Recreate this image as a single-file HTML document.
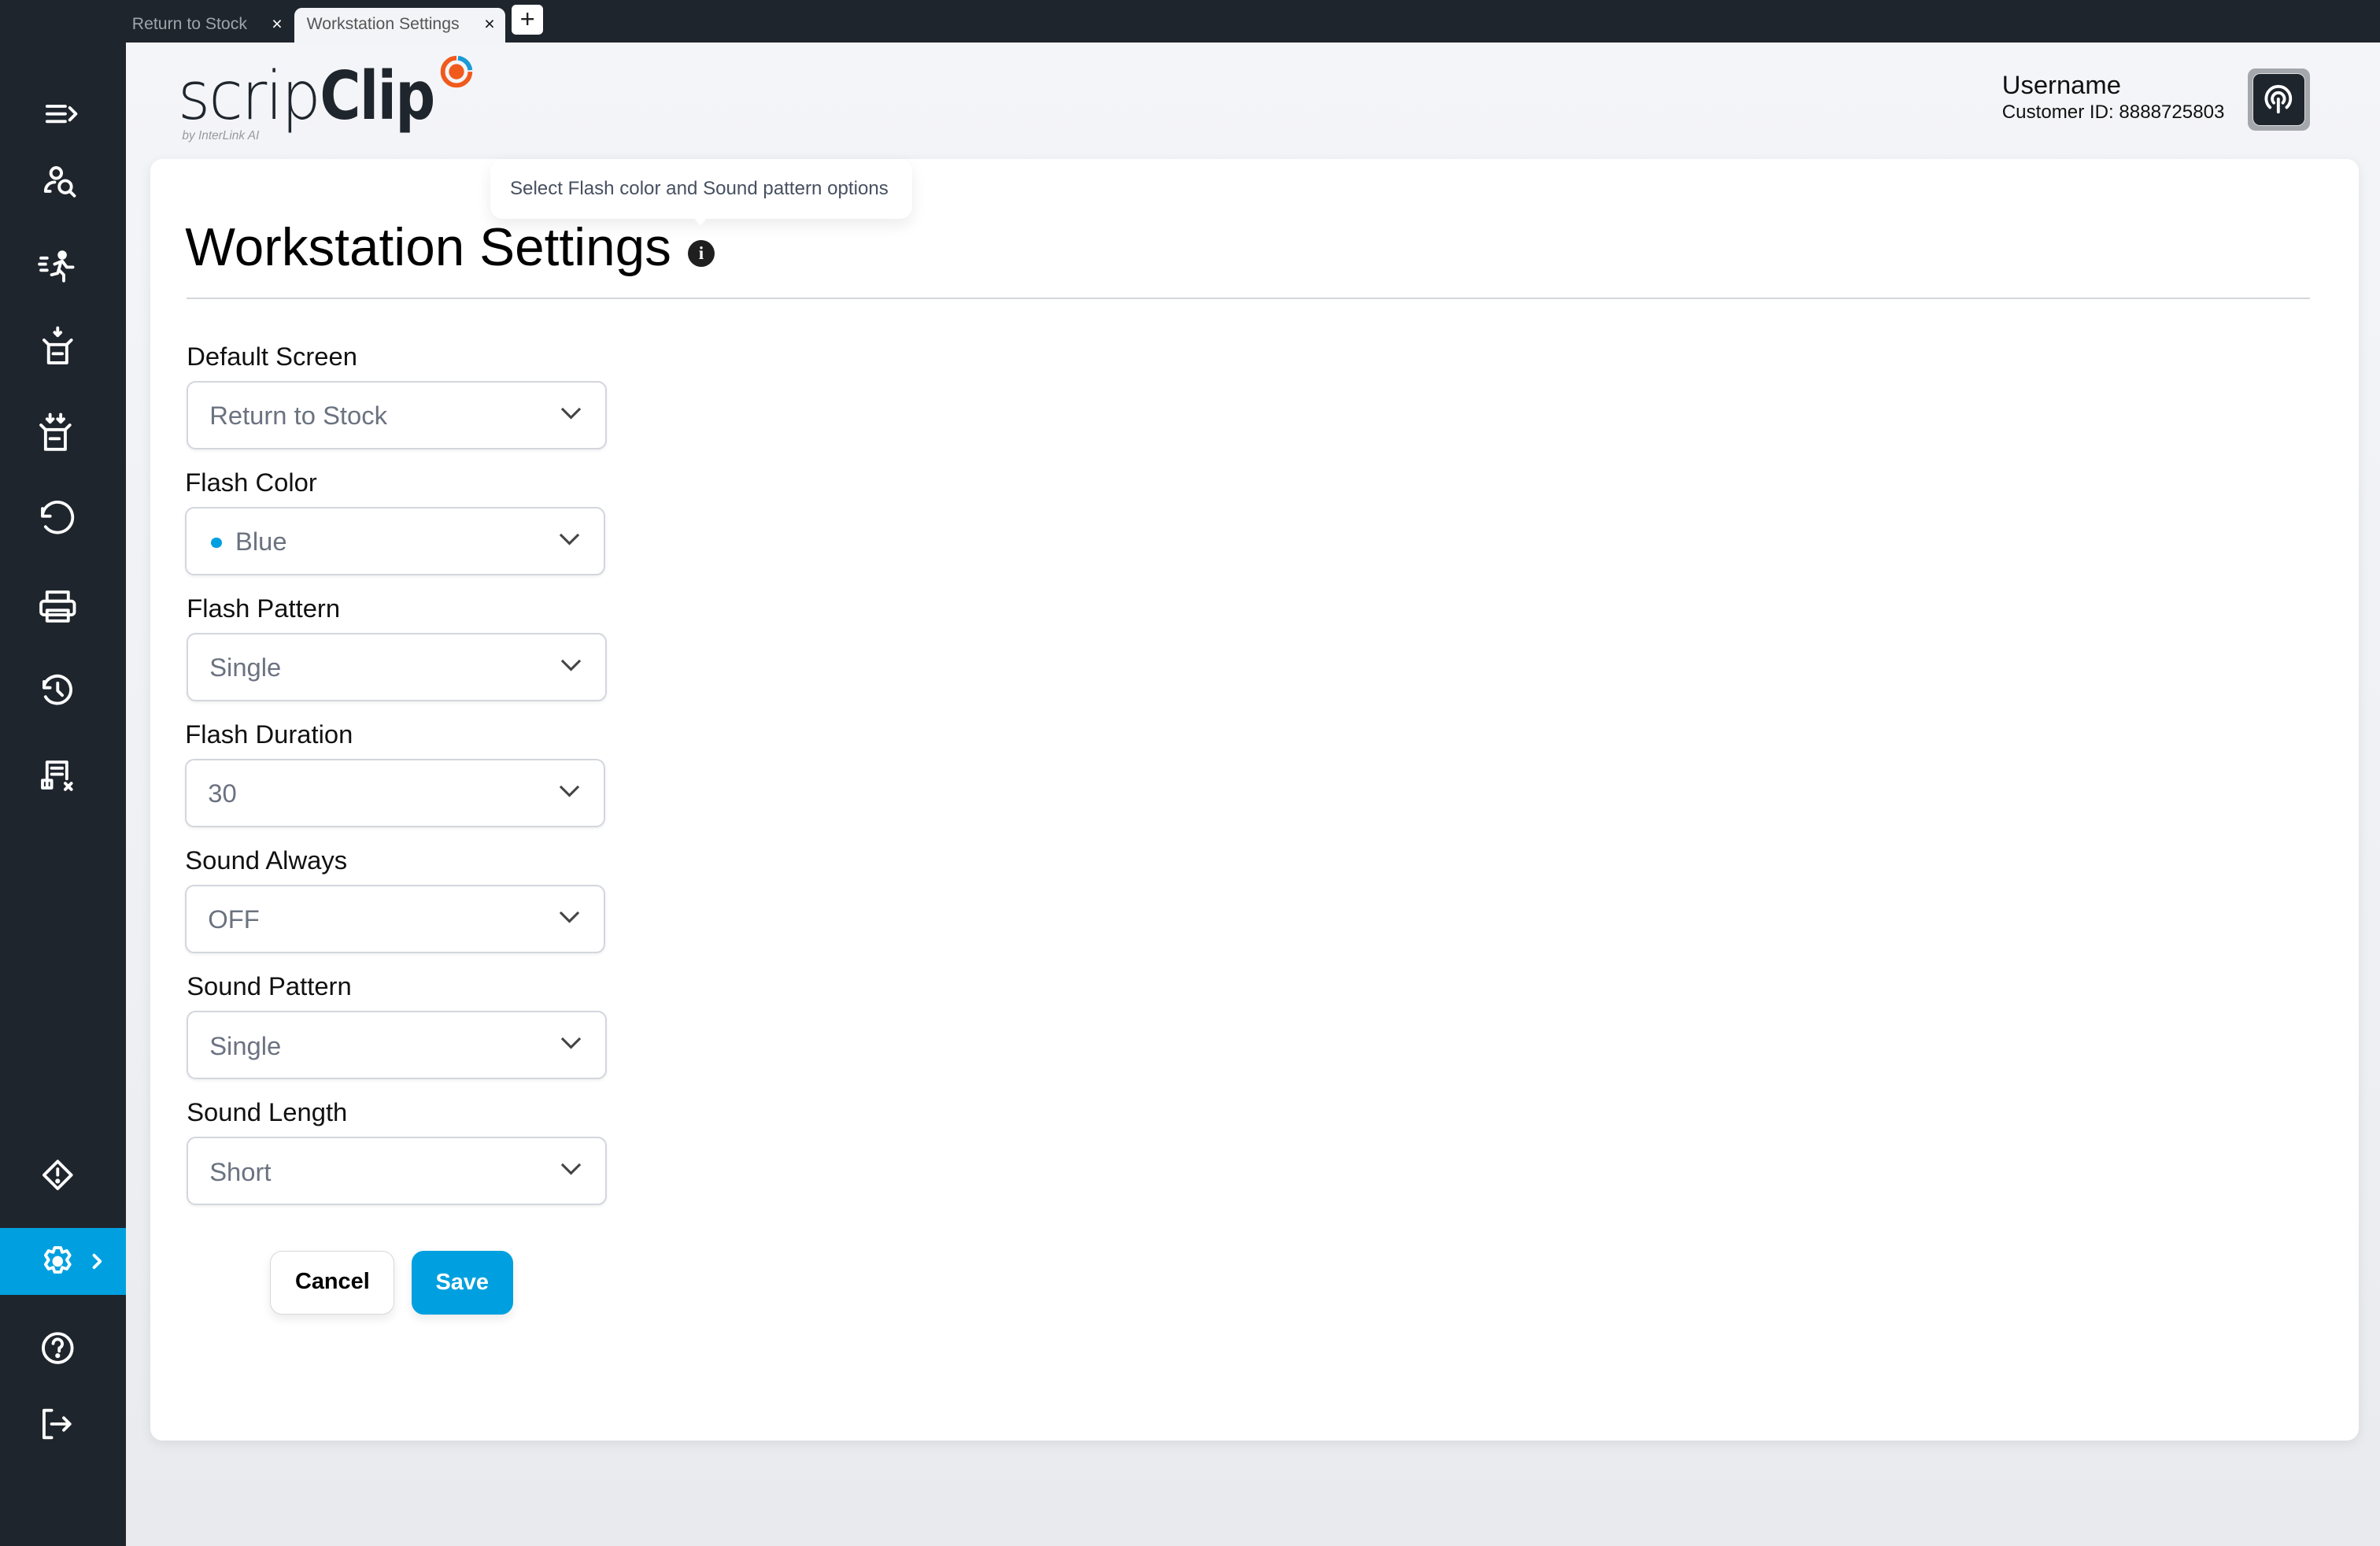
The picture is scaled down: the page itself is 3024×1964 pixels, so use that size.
<!DOCTYPE html>
<html><head><meta charset="utf-8"><style>
*{box-sizing:border-box;margin:0;padding:0}
html,body{width:3024px;height:1964px;overflow:hidden}
body{background:#1f252d;font-family:"Liberation Sans",Arial,sans-serif}
#w{zoom:1.92857;width:1568px;height:1019px;position:relative}
.top{position:absolute;left:0;top:0;width:1568px;height:28px;background:#1f252d}
.side{position:absolute;left:0;top:0;width:83px;height:1019px;background:#1f252d}
.main{position:absolute;left:83px;top:28px;right:0;bottom:0;background:linear-gradient(180deg,#f4f5f9 0%,#eef0f4 60%,#e9eaee 100%)}
.tab1{position:absolute;left:87px;top:10px;font-size:11px;color:#a0a4aa}
.x{position:absolute;top:9px;font-size:12px;color:#fff}
.tab2{position:absolute;left:194px;top:5px;width:139px;height:24px;background:#f3f4f8;border-radius:5px 5px 0 0;font-size:11px;color:#555;padding:5px 0 0 8px}
.plus{position:absolute;left:337px;top:3px;width:21px;height:20px;background:#fff;border-radius:3px;font-size:17px;line-height:19px;text-align:center;color:#222}
.card{position:absolute;left:99px;top:105px;width:1455px;height:844px;background:#fff;border-radius:8px;box-shadow:0 2px 8px rgba(0,0,0,.08)}
.lbl{position:absolute;font-size:17px;color:#111}
.sel{position:absolute;width:277px;height:45px;border:1.5px solid #d3d6dd;border-radius:6px;box-shadow:0 1px 2px rgba(0,0,0,.06);font-size:17px;color:#6b7280;padding:12px 0 0 14px;background:#fff}
.sel svg{position:absolute;right:16px;top:16px}
</style></head><body><div id="w">
<div class="main"></div>
<div class="top"></div>
<div class="side"></div>
<div class="tab1">Return to Stock</div><div class="x" style="left:179px">×</div>
<div class="tab2">Workstation Settings</div><div class="x" style="left:319px;color:#111">×</div>
<div class="plus">+</div>

<!-- logo -->
<div style="position:absolute;left:117px;top:38px;font-size:44px;color:#1f252d;white-space:nowrap;font-family:'DejaVu Sans',sans-serif;font-weight:300;transform:scaleX(0.93);transform-origin:left"><span style="letter-spacing:-1px">scrip</span><b style="display:inline-block;font-weight:bold;transform:scaleX(0.9);transform-origin:left;letter-spacing:-1px">Clip</b></div>
<svg style="position:absolute;left:287px;top:34px" width="30" height="28" viewBox="0 0 30 28"><circle cx="14" cy="13" r="5" fill="#f05a1c"/><path d="M14 4 A9 9 0 1 0 23 13" stroke="#f05a1c" stroke-width="3" fill="none"/><path d="M15 4 A9 9 0 0 1 23 12" stroke="#1a9ad6" stroke-width="3" fill="none"/></svg>
<div style="position:absolute;left:120px;top:85px;font-size:8px;color:#999;font-style:italic">by InterLink AI</div>

<div style="position:absolute;left:1319px;top:46px;font-size:17px;color:#111">Username</div>
<div style="position:absolute;left:1319px;top:67px;font-size:12.5px;color:#111">Customer ID: 8888725803</div>
<div style="position:absolute;left:1481px;top:45px;width:41px;height:41px;background:#a4a7ab;border-radius:5px;padding:3px"><div style="width:35px;height:35px;background:#1f252d;border-radius:5px;border:1px solid #ddd">
<svg width="33" height="33" viewBox="0 0 33 33" fill="none" stroke="#fff" stroke-width="2" stroke-linecap="round"><path d="M11 22 A8 8 0 1 1 22 22"/><path d="M13.5 19 A4 4 0 1 1 19.5 19"/><path d="M16.5 16.5 V25"/></svg></div></div>

<!-- sidebar icons -->
<svg style="position:absolute;left:0;top:0" width="83" height="1019" fill="none" stroke="#fff" stroke-width="2" stroke-linecap="round" stroke-linejoin="round">
<path d="M31 70h12M31 75h12M31 80h12M46 71l4 4-4 4"/>
<circle cx="37" cy="114" r="3.5"/><path d="M33 126h-3c0-4 3-6 6-6"/><circle cx="43" cy="123" r="4"/><path d="M46 126l3 3"/>
<circle cx="41" cy="168" r="2" fill="#fff"/><path d="M27 170h4M26 174h4M27 178h4M36 174l5-2 3 4h4M40 173l-2 7-4 1M39 178l3 3v4"/>
<path d="M29 224l3 3v12h12v-12l3-3M32 227h12M35 233h6M38 216v5M36 219l2 2 2-2"/>
<path d="M27 280l3 3v13h13v-13l3-3M30 283h13M33 289h6M33 273v5M31 276l2 2 2-2M40 273v5M38 276l2 2 2-2"/>
<path d="M28 339a10 10 0 1 1 2 8M28 335v5h5"/>
<rect x="31" y="390" width="14" height="6"/><rect x="27" y="396" width="22" height="9" rx="2"/><rect x="31" y="402" width="14" height="7"/>
<path d="M29 452a9 9 0 1 1 1 7M29 449v4h4M38 450v5l3 3"/>
<path d="M31 518v-16h13v11M34 506h7M34 510h7M28 514h6v5h-6zM43 516l4 4M47 516l-4 4"/>
<path d="M38 765l9 9-9 9-9-9z"/><path d="M38 770v4"/><circle cx="38" cy="778" r=".6" fill="#fff"/>
<circle cx="38" cy="888" r="9.5"/><path d="M35 885a3 3 0 1 1 4 3v2"/><circle cx="38" cy="893" r=".6" fill="#fff"/>
<path d="M34 929h-5v18h5M34 938h12M42 934l4 4-4 4"/>
</svg>
<div style="position:absolute;left:0;top:809px;width:83px;height:44px;background:#00a0e0"></div>
<svg style="position:absolute;left:0;top:809px" width="83" height="44" fill="none" stroke="#fff" stroke-width="2" stroke-linecap="round" stroke-linejoin="round">
<path d="M36 13h4l1 3 3-1 2 3-2 3 2 3-2 3-3-1-1 3h-4l-1-3-3 1-2-3 2-3-2-3 2-3 3 1z"/><circle cx="38" cy="22" r="2.5" fill="#fff"/><path d="M62 18l4 4-4 4"/></svg>

<div class="card"></div>
<div style="position:absolute;left:323px;top:105px;width:278px;height:39px;background:#fff;border-radius:8px;box-shadow:0 4px 10px rgba(0,0,0,.08);font-size:12.5px;color:#475060;padding:12px 0 0 13px">Select Flash color and Sound pattern options</div>
<div style="position:absolute;left:457px;top:143px;width:0;height:0;border-left:5px solid transparent;border-right:5px solid transparent;border-top:6px solid #fff"></div>
<div style="position:absolute;left:122px;top:143px;font-size:35px;color:#000">Workstation Settings</div>
<div style="position:absolute;left:453px;top:158px;width:18px;height:18px;border-radius:50%;background:#1f1f1f;color:#fff;font-size:12px;font-weight:bold;text-align:center;line-height:18px;font-family:'Liberation Serif',serif">i</div>
<div style="position:absolute;left:123px;top:196px;width:1399px;height:1px;background:#d3d6dd"></div>

<div class="lbl" style="left:123px;top:225px">Default Screen</div>
<div class="sel" style="left:123px;top:251px">Return to Stock<svg width="14" height="9"><path d="M1 1l6 6 6-6" stroke="#444" stroke-width="1.6" fill="none"/></svg></div>
<div class="lbl" style="left:122px;top:308px">Flash Color</div>
<div class="sel" style="left:122px;top:334px;padding-left:32px">Blue<span style="position:absolute;left:16px;top:19px;width:7px;height:7px;border-radius:50%;background:#00a0e0"></span><svg width="14" height="9"><path d="M1 1l6 6 6-6" stroke="#444" stroke-width="1.6" fill="none"/></svg></div>
<div class="lbl" style="left:123px;top:391px">Flash Pattern</div>
<div class="sel" style="left:123px;top:417px">Single<svg width="14" height="9"><path d="M1 1l6 6 6-6" stroke="#444" stroke-width="1.6" fill="none"/></svg></div>
<div class="lbl" style="left:122px;top:474px">Flash Duration</div>
<div class="sel" style="left:122px;top:500px">30<svg width="14" height="9"><path d="M1 1l6 6 6-6" stroke="#444" stroke-width="1.6" fill="none"/></svg></div>
<div class="lbl" style="left:122px;top:557px">Sound Always</div>
<div class="sel" style="left:122px;top:583px">OFF<svg width="14" height="9"><path d="M1 1l6 6 6-6" stroke="#444" stroke-width="1.6" fill="none"/></svg></div>
<div class="lbl" style="left:123px;top:640px">Sound Pattern</div>
<div class="sel" style="left:123px;top:666px">Single<svg width="14" height="9"><path d="M1 1l6 6 6-6" stroke="#444" stroke-width="1.6" fill="none"/></svg></div>
<div class="lbl" style="left:123px;top:723px">Sound Length</div>
<div class="sel" style="left:123px;top:749px">Short<svg width="14" height="9"><path d="M1 1l6 6 6-6" stroke="#444" stroke-width="1.6" fill="none"/></svg></div>

<div style="position:absolute;left:178px;top:824px;width:82px;height:42px;border:1px solid #d8d8d8;border-radius:8px;background:#fff;box-shadow:0 3px 6px rgba(0,0,0,.08);font-size:15px;font-weight:bold;text-align:center;line-height:40px;color:#000">Cancel</div>
<div style="position:absolute;left:271px;top:824px;width:67px;height:42px;border-radius:8px;background:#00a0e0;box-shadow:0 3px 6px rgba(0,0,0,.08);font-size:15px;font-weight:bold;text-align:center;line-height:42px;color:#fff">Save</div>
</div></body></html>
